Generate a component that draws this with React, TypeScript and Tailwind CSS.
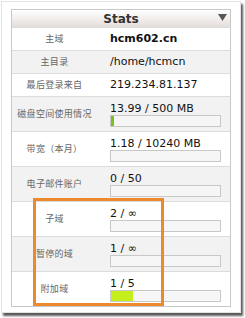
import React from 'react';

type Row = {
  label: string;
  value: string;
  bold?: boolean;
  bar?: { pct: number; color: string };
};

const rows: Row[] = [
  { label: '主域', value: 'hcm602.cn', bold: true },
  { label: '主目录', value: '/home/hcmcn' },
  { label: '最后登录来自', value: '219.234.81.137' },
  { label: '磁盘空间使用情况', value: '13.99 / 500 MB', bar: { pct: 2.8, color: '#7cc21e' } },
  { label: '带宽（本月）', value: '1.18 / 10240 MB', bar: { pct: 0, color: '#7cc21e' } },
  { label: '电子邮件账户', value: '0 / 50', bar: { pct: 0, color: '#7cc21e' } },
  { label: '子域', value: '2 / ∞', bar: { pct: 0, color: '#7cc21e' } },
  { label: '暂停的域', value: '1 / ∞', bar: { pct: 0, color: '#7cc21e' } },
  { label: '附加域', value: '1 / 5', bar: { pct: 20, color: '#c4ee1c' } },
];

const labelFont = { fontFamily: '"Noto Sans CJK SC", "DejaVu Sans", sans-serif' };
const valueFont = { fontFamily: '"DejaVu Sans", "Noto Sans CJK SC", sans-serif' };

function StatRow({ row, index }: { row: Row; index: number }) {
  const shaded = index % 2 === 1;
  return (
    <div
      className={`grid grid-cols-[85px_1fr] border-t border-[#dcdcdc] ${
        row.bar ? 'h-[35px]' : 'h-[23px]'
      } ${shaded ? 'bg-[#f2f2f2]' : 'bg-white'}`}
    >
      <div className="flex items-center justify-center text-[9px] tracking-[0.3px] text-[#666]" style={labelFont}>
        {row.label}
      </div>
      {row.bar ? (
        <div className="pl-[13px] pr-[9px] pt-[5px]">
          <div className="text-[11px] leading-[13px] text-[#111]" style={valueFont}>
            {row.value}
          </div>
          <div className="mt-[0px] h-[12px] border border-[#c8c8c8] bg-[#f6f6f6]">
            <div className="h-full" style={{ width: `${row.bar.pct}%`, background: row.bar.color }} />
          </div>
        </div>
      ) : (
        <div
          className={`flex items-center pl-[13px] text-[11px] text-[#111] ${row.bold ? 'font-bold' : ''}`}
          style={valueFont}
        >
          {row.value}
        </div>
      )}
    </div>
  );
}

export default function App() {
  return (
    <div className="w-[245px] h-[318px] bg-white overflow-hidden">
      <div className="relative ml-[1px] mt-[1px] w-[240px] h-[312px] bg-white border border-[#e2e2e2] shadow-[2px_3px_2px_rgba(0,0,0,0.65)] pl-[9px] pt-[7px]">
        <div className="w-[220px] border border-[#c8c8c8]">
          {/* Header */}
          <div className="relative h-[17px] flex items-center justify-center bg-gradient-to-b from-white to-[#e4dedb]">
            <span className="text-[12px] font-bold text-[#333]" style={valueFont}>
              Stats
            </span>
            <svg className="absolute right-[3px] top-[4px]" width="9" height="7" viewBox="0 0 9 7">
              <polygon points="0,0 9,0 4.5,7" fill="#555" />
            </svg>
          </div>
          {rows.map((row, i) => (
            <StatRow key={row.label} row={row} index={i} />
          ))}
        </div>
        {/* highlight box */}
        <div className="absolute left-[31px] top-[196px] w-[131px] h-[108px] border-[3px] border-[#ec8a2b]" />
      </div>
    </div>
  );
}
